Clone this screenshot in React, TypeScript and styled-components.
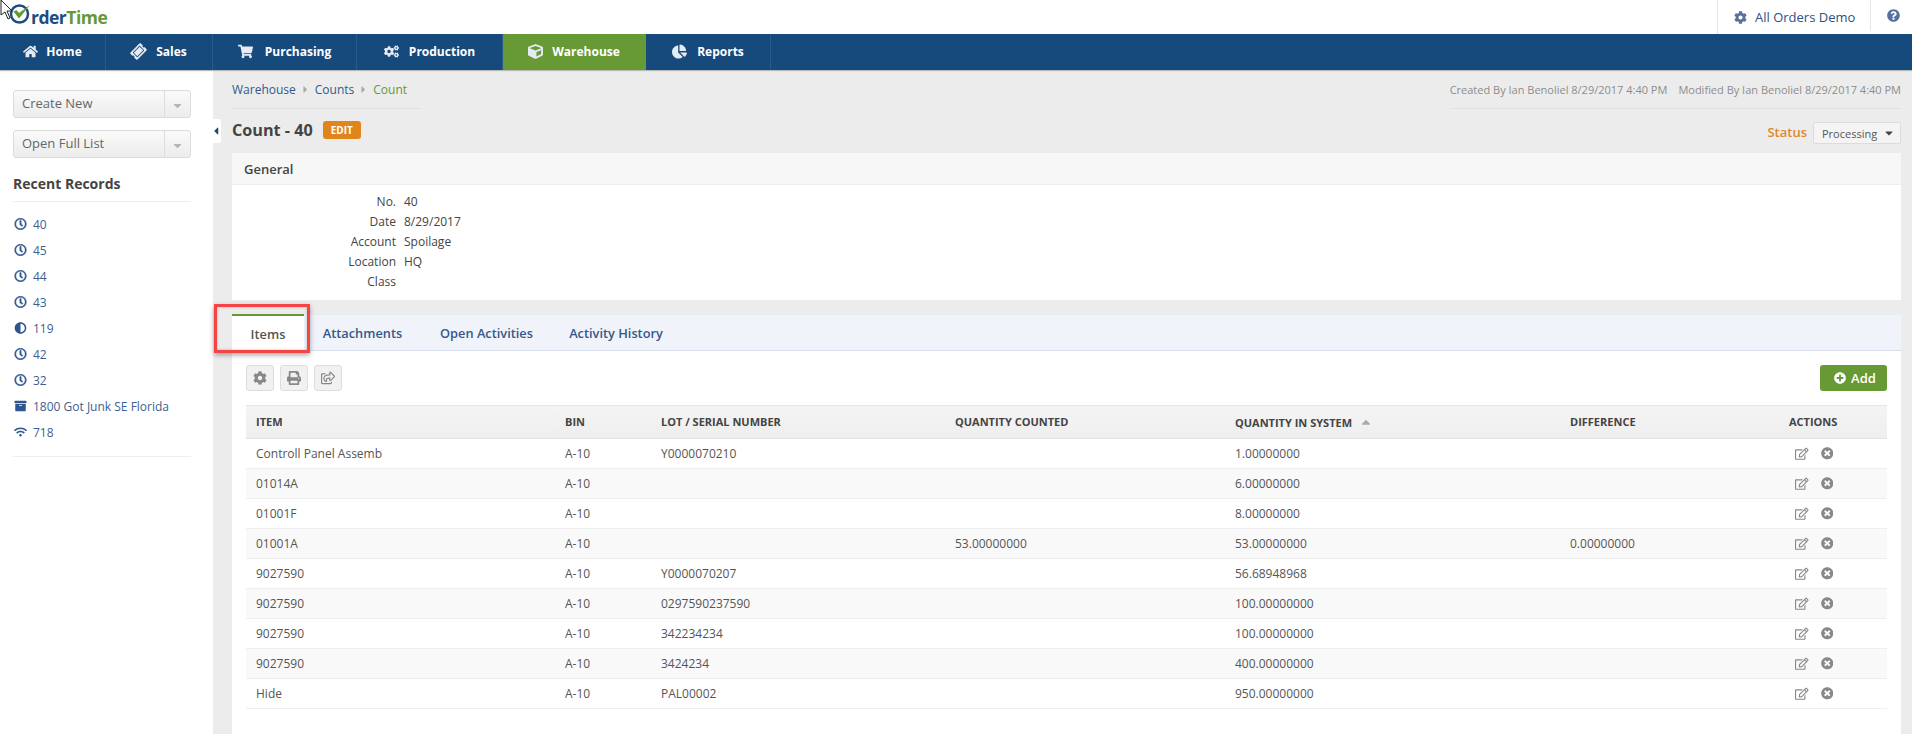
import React from "react";
import styled, { createGlobalStyle } from "styled-components";
import {
  FaHome, FaTicketAlt, FaShoppingCart, FaCogs, FaCube, FaChartPie, FaCog, FaQuestionCircle,
  FaRegClock, FaAdjust, FaArchive, FaWifi, FaPrint, FaRegShareSquare, FaPlusCircle, FaRegEdit,
  FaTimesCircle, FaCaretDown, FaCaretRight, FaCaretLeft, FaCaretUp,
} from "react-icons/fa";

const Global = createGlobalStyle`
  html, body { margin: 0; padding: 0; background: #fff; }
  body { font-family: "Open Sans", "Liberation Sans", sans-serif; font-size: 12px; color: #444; overflow: hidden; }
  * { box-sizing: border-box; }
`;

const Page = styled.div`
  width: 1912px; height: 734px; display: flex; flex-direction: column; overflow: hidden; position: relative;
`;
const Header = styled.header`
  height: 34px; display: flex; justify-content: space-between; background: #fff;
`;
const Logo = styled.div`
  display: flex; align-items: center; padding-left: 9px; height: 34px;
  font-family: "Open Sans", sans-serif; font-weight: 700; font-size: 17.5px; letter-spacing: -0.5px;
  svg { margin-bottom: 9px; }
`;
const LogoDark = styled.span` color: #1d4d80; margin-left: -2px; `;
const LogoGreen = styled.span` color: #669933; `;
const Cursor = styled.svg` position: absolute; left: 0; top: 0; `;
const HeaderRight = styled.div` display: flex; height: 34px; `;
const Account = styled.div`
  display: flex; align-items: center; gap: 8px; height: 34px; width: 153px; padding-left: 16px;
  border-left: 1px solid #e6e6e6; color: #2f4f80; font-size: 13px;
  svg { color: #56719c; font-size: 13px; }
`;
const Help = styled.div`
  display: flex; align-items: center; height: 31px; width: 42px; padding-left: 16px; border-left: 1px solid #e6e6e6;
  svg { color: #56719c; font-size: 13px; }
`;
const Nav = styled.nav`
  height: 36px; display: flex; background: #174a7c; box-shadow: 0 1px 1px #bbb; position: relative; z-index: 2;
`;
const NavItem = styled.div<{ $w: number; $active?: boolean; $shift: number }>`
  width: ${(p) => p.$w}px; display: flex; align-items: center; justify-content: center; gap: ${(p) => 9 + p.$shift}px;
  background: ${(p) => (p.$active ? "#679a34" : "transparent")};
  border-right: 1px solid ${(p) => (p.$active ? "#679a34" : "#2b5a8a")};
  color: #fff; font-weight: 700; font-size: 12px; padding-bottom: 1px;
  svg { font-size: 15px; color: #e4ebf2; }
`;
const Body = styled.div` flex: 1; display: flex; min-height: 0; `;
const Sidebar = styled.aside`
  width: 213px; background: #fff; padding: 20px 22px 0 13px; flex: none; position: relative;
`;
const Collapse = styled.div`
  position: absolute; right: -8px; top: 49px; width: 8px; height: 24px; background: #fff; border-radius: 0 2px 2px 0;
  display: flex; align-items: center; justify-content: center; color: #174a7c; font-size: 12px;
  svg { margin-left: -2px; }
`;
const SplitButton = styled.div`
  height: 28px; display: flex; margin-bottom: 12px; border: 1px solid #dcdcdc; border-radius: 3px;
  background: linear-gradient(#fafafa, #ececec); color: #666; font-size: 13px; font-weight: 400;
`;
const SplitLabel = styled.div` flex: 1; display: flex; align-items: center; padding: 0 0 2px 8px; `;
const SplitCaret = styled.div`
  width: 26px; border-left: 1px solid #dcdcdc; display: flex; align-items: center; justify-content: center; color: #b5b5b5; font-size: 13px; padding-top: 3px;
`;
const SideTitle = styled.h3`
  margin: 16px 0 0; padding-bottom: 8px; font-size: 14px; line-height: 19px; font-weight: 700; color: #444; border-bottom: 1px solid #eee;
`;
const RecentList = styled.ul`
  list-style: none; margin: 0; padding: 9px 0 11px; border-bottom: 1px solid #eee;
`;
const RecentItem = styled.li`
  height: 26px; display: flex; align-items: center; gap: 6px; padding-left: 1px; color: #3d5f90; font-size: 12px;
  svg { font-size: 12px; width: 13px; color: #2f5590; }
`;
const ClockIcon = styled(FaRegClock)`
  stroke: currentColor; stroke-width: 22;
`;
const Main = styled.main`
  flex: 1; background: #ececec; padding: 0 11px 0 19px; min-width: 0; display: flex; flex-direction: column;
`;
const MetaRow = styled.div` display: flex; justify-content: space-between; height: 39px; `;
const Breadcrumbs = styled.div`
  width: 189px; height: 39px; padding-top: 11px; border-bottom: 1px solid #e2e2e2; display: flex; align-items: flex-start; gap: 4px;
  line-height: 17px; color: #2f5a8f; font-size: 12px; svg { color: #aaa; font-size: 11px; margin-top: 3px; }
`;
const Crumb = styled.span<{ $current?: boolean }>` color: ${(p) => (p.$current ? "#669933" : "#2f5a8f")}; `;
const Audit = styled.div`
  width: 451px; height: 39px; padding-top: 11px; border-bottom: 1px solid #e2e2e2; display: flex; justify-content: flex-end; gap: 11px;
  line-height: 17px; color: #8c8c8c; font-size: 11px; white-space: nowrap;
`;
const TitleRow = styled.div` height: 44px; display: flex; justify-content: space-between; align-items: flex-start; `;
const TitleLeft = styled.div` display: flex; align-items: center; gap: 10px; height: 34px; padding-top: 8px; `;
const Title = styled.h1` margin: 0; font-size: 16.2px; font-weight: 700; color: #444; line-height: 22px; `;
const EditBadge = styled.span`
  width: 38px; height: 18px; background: #e0851b; border-radius: 3px; color: #fff; font-size: 10px; font-weight: 700;
  display: flex; align-items: center; justify-content: center;
`;
const StatusWrap = styled.div` display: flex; align-items: center; gap: 6px; margin-top: 13px; `;
const StatusLabel = styled.span` color: #e0872e; font-size: 13px; font-weight: 600; padding-bottom: 2px; `;
const Select = styled.div`
  width: 88px; height: 22px; background: #f4f4f4; border: 1px solid #dcdcdc; border-radius: 2px;
  display: flex; align-items: center; justify-content: space-between; padding: 0 5px 0 8px; font-size: 11px; color: #555;
  svg { font-size: 12px; color: #444; }
`;
const GeneralPanel = styled.section` background: #fff; flex: none; `;
const PanelHead = styled.div`
  height: 32px; background: #f7f7f7; border-bottom: 1px solid #eee; padding: 1px 0 0 12px; display: flex; align-items: center;
  font-weight: 600; font-size: 13px; color: #444;
`;
const Fields = styled.dl`
  margin: 0; padding: 6px 0 10px; display: grid; grid-template-columns: 164px 1fr; column-gap: 8px; grid-auto-rows: 20px; align-items: center; height: 115px;
`;
const FieldLabel = styled.dt` text-align: right; color: #444; `;
const FieldValue = styled.dd` margin: 0; color: #444; `;
const Card = styled.section` margin-top: 14px; background: #fff; flex: 1; min-height: 0; `;
const Tabs = styled.div`
  height: 37px; display: flex; background: #f0f4fa; border-top: 1px solid #e8ecf2; border-bottom: 1px solid #d7e0ec;
`;
const Tab = styled.div<{ $active?: boolean; $w: number }>`
  width: ${(p) => p.$w}px; display: flex; align-items: center; justify-content: center; font-size: 12.8px; font-weight: 600;
  margin-top: ${(p) => (p.$active ? "-1px" : "0")};
  height: ${(p) => (p.$active ? "37px" : "auto")};
  color: ${(p) => (p.$active ? "#555" : "#37578a")};
  background: ${(p) => (p.$active ? "#fff" : "transparent")};
  border-top: ${(p) => (p.$active ? "2px solid #669933" : "none")};
`;
const Highlight = styled.div`
  position: absolute; left: 214px; top: 304px; width: 96px; height: 49px; border: 3.5px solid #f44444; box-shadow: 0 2px 5px rgba(0,0,0,.35), inset 0 0 3px rgba(0,0,0,.25);
  pointer-events: none;
`;
const Toolbar = styled.div` display: flex; justify-content: space-between; padding: 14px 14px 14px; height: 54px; `;
const ToolGroup = styled.div` display: flex; gap: 6px; `;
const ToolButton = styled.div`
  width: 28px; height: 26px; border: 1px solid #ddd; border-radius: 3px; background: #f1f1f1; display: flex; align-items: center; justify-content: center;
  color: #888; font-size: 14px;
`;
const AddButton = styled.div`
  width: 67px; height: 26px; background: #679a34; border-radius: 3px; color: #fff; font-weight: 600; font-size: 13px;
  display: flex; align-items: center; justify-content: center; gap: 5px; padding-left: 3px;
  svg { font-size: 12px; }
`;
const Table = styled.table`
  margin: 0 14px; width: 1641px; border-collapse: collapse; table-layout: fixed;
`;
const Th = styled.th<{ $w: number }>`
  width: ${(p) => p.$w}px; height: 33px; padding: 0 0 1px 10px; text-align: left; font-size: 11px; font-weight: 700; color: #444;
  background: linear-gradient(#f4f4f4, #eee); border-top: 1px solid #e6e6e6; border-bottom: 1px solid #e2e2e2;
`;
const SortMark = styled.span` color: #aaa; margin-left: 7px; font-size: 14px; svg { vertical-align: -2px; } `;
const Tr = styled.tr<{ $alt: boolean }>` background: ${(p) => (p.$alt ? "#f9f9f9" : "#fff")}; `;
const Td = styled.td`
  height: 30px; padding: 0 0 0 10px; font-size: 12px; color: #555; border-bottom: 1px solid #eee;
`;
const ActionCell = styled.div`
  display: flex; align-items: center; gap: 12px; padding-left: 6px; color: #888;
  svg:first-child { font-size: 13.5px; }
  svg:last-child { font-size: 12.5px; }
`;

const navItems = [
  { l: "Home", w: 106, s: -1, i: <FaHome /> },
  { l: "Sales", w: 107, s: 1, i: <FaTicketAlt style={{ transform: "rotate(-45deg)" }} /> },
  { l: "Purchasing", w: 144, s: 3, i: <FaShoppingCart /> },
  { l: "Production", w: 146, s: 1, i: <FaCogs /> },
  { l: "Warehouse", w: 143, s: 0, i: <FaCube />, a: true },
  { l: "Reports", w: 125, s: 1, i: <FaChartPie /> },
];
const clock = <ClockIcon />;
const recent = [
  { l: "40", i: clock }, { l: "45", i: clock }, { l: "44", i: clock }, { l: "43", i: clock },
  { l: "119", i: <FaAdjust /> }, { l: "42", i: clock }, { l: "32", i: clock },
  { l: "1800 Got Junk SE Florida", i: <FaArchive /> }, { l: "718", i: <FaWifi /> },
];
const fields = [["No.", "40"], ["Date", "8/29/2017"], ["Account", "Spoilage"], ["Location", "HQ"], ["Class", ""]];
const cols: [string, number][] = [["ITEM", 309], ["BIN", 96], ["LOT / SERIAL NUMBER", 294], ["QUANTITY COUNTED", 280], ["QUANTITY IN SYSTEM", 335], ["DIFFERENCE", 219], ["ACTIONS", 108]];
const rows = [
  ["Controll Panel Assemb", "A-10", "Y0000070210", "", "1.00000000", ""],
  ["01014A", "A-10", "", "", "6.00000000", ""],
  ["01001F", "A-10", "", "", "8.00000000", ""],
  ["01001A", "A-10", "", "53.00000000", "53.00000000", "0.00000000"],
  ["9027590", "A-10", "Y0000070207", "", "56.68948968", ""],
  ["9027590", "A-10", "0297590237590", "", "100.00000000", ""],
  ["9027590", "A-10", "342234234", "", "100.00000000", ""],
  ["9027590", "A-10", "3424234", "", "400.00000000", ""],
  ["Hide", "A-10", "PAL00002", "", "950.00000000", ""],
];

export default function App() {
  return (
    <Page>
      <Global />
      <Header>
        <Logo>
          <svg width="24" height="24" viewBox="0 0 24 24">
            <circle cx="10.5" cy="13" r="8.5" fill="none" stroke="#1d4d80" strokeWidth="2.5" />
            <path d="M4.5 10.5l5.5 7L21 4l-11 8-2.5-3z" fill="#669933" />
          </svg>
          <LogoDark>rder</LogoDark>
          <LogoGreen>Time</LogoGreen>
        </Logo>
        <HeaderRight>
          <Account><FaCog />All Orders Demo</Account>
          <Help><FaQuestionCircle /></Help>
        </HeaderRight>
      </Header>
      <Cursor width="13" height="20" viewBox="0 0 13 20">
        <path d="M1 0v15l4-3 3 7 2-1-3-7h5z" fill="#fff" stroke="#222" strokeWidth="1" />
      </Cursor>
      <Nav>
        {navItems.map((n) => (
          <NavItem key={n.l} $w={n.w} $active={n.a} $shift={n.s}>{n.i}{n.l}</NavItem>
        ))}
      </Nav>
      <Body>
        <Sidebar>
          <Collapse><FaCaretLeft /></Collapse>
          <SplitButton><SplitLabel>Create New</SplitLabel><SplitCaret><FaCaretDown /></SplitCaret></SplitButton>
          <SplitButton><SplitLabel>Open Full List</SplitLabel><SplitCaret><FaCaretDown /></SplitCaret></SplitButton>
          <SideTitle>Recent Records</SideTitle>
          <RecentList>
            {recent.map((r, i) => (
              <RecentItem key={i}>{r.i}{r.l}</RecentItem>
            ))}
          </RecentList>
        </Sidebar>
        <Main>
          <MetaRow>
            <Breadcrumbs>
              <Crumb>Warehouse</Crumb><FaCaretRight /><Crumb>Counts</Crumb><FaCaretRight /><Crumb $current>Count</Crumb>
            </Breadcrumbs>
            <Audit>
              <span>Created By Ian Benoliel 8/29/2017 4:40 PM</span>
              <span>Modified By Ian Benoliel 8/29/2017 4:40 PM</span>
            </Audit>
          </MetaRow>
          <TitleRow>
            <TitleLeft><Title>Count - 40</Title><EditBadge>EDIT</EditBadge></TitleLeft>
            <StatusWrap>
              <StatusLabel>Status</StatusLabel>
              <Select>Processing<FaCaretDown /></Select>
            </StatusWrap>
          </TitleRow>
          <GeneralPanel>
            <PanelHead>General</PanelHead>
            <Fields>
              {fields.map(([k, v]) => (
                <React.Fragment key={k}>
                  <FieldLabel>{k}</FieldLabel>
                  <FieldValue>{v}</FieldValue>
                </React.Fragment>
              ))}
            </Fields>
          </GeneralPanel>
          <Card>
            <Tabs>
              <Tab $active $w={72}>Items</Tab>
              <Tab $w={117}>Attachments</Tab>
              <Tab $w={131}>Open Activities</Tab>
              <Tab $w={128}>Activity History</Tab>
            </Tabs>
            <Toolbar>
              <ToolGroup>
                <ToolButton><FaCog /></ToolButton>
                <ToolButton><FaPrint /></ToolButton>
                <ToolButton><FaRegShareSquare /></ToolButton>
              </ToolGroup>
              <AddButton><FaPlusCircle />Add</AddButton>
            </Toolbar>
            <Table>
              <thead>
                <tr>
                  {cols.map(([c, w]) => (
                    <Th key={c} $w={w}>
                      {c}
                      {c === "QUANTITY IN SYSTEM" && <SortMark><FaCaretUp /></SortMark>}
                    </Th>
                  ))}
                </tr>
              </thead>
              <tbody>
                {rows.map((r, i) => (
                  <Tr key={i} $alt={i % 2 === 1}>
                    {r.map((c, j) => <Td key={j}>{c}</Td>)}
                    <Td><ActionCell><FaRegEdit /><FaTimesCircle /></ActionCell></Td>
                  </Tr>
                ))}
              </tbody>
            </Table>
          </Card>
        </Main>
      </Body>
      <Highlight />
    </Page>
  );
}
